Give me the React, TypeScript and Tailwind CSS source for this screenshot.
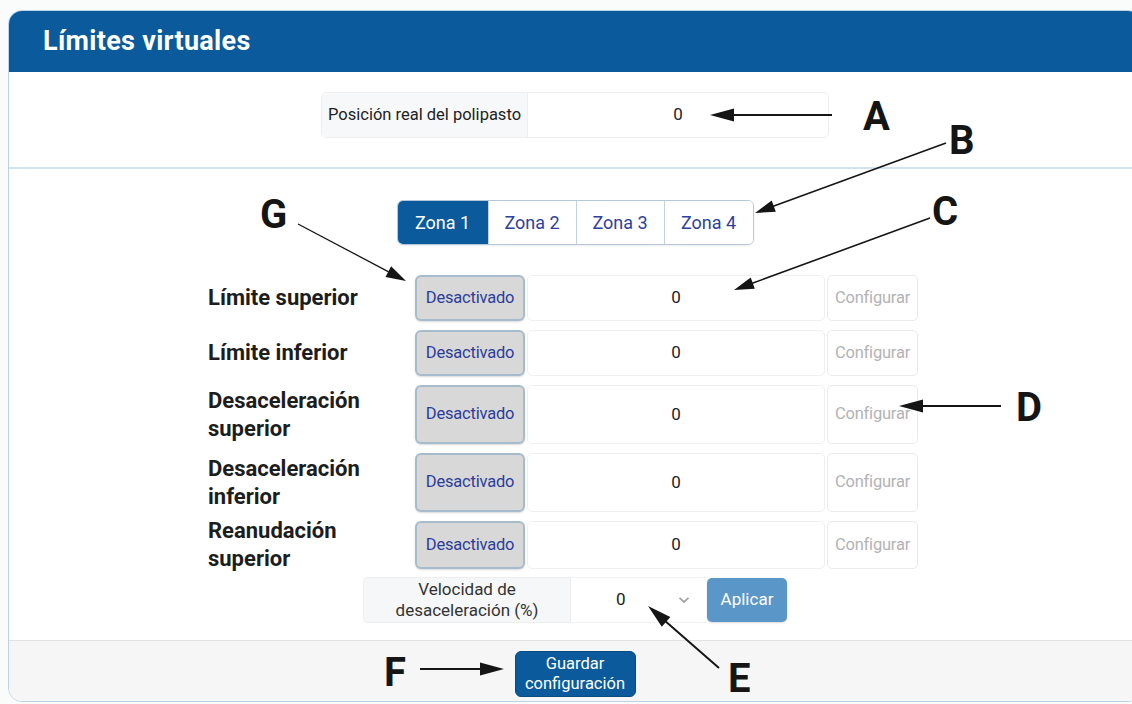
import React from 'react';

const rows = [
  { label: ['Límite superior'], h: 'h-[46px]' },
  { label: ['Límite inferior'], h: 'h-[46px]' },
  { label: ['Desaceleración', 'superior'], h: 'h-[59px]' },
  { label: ['Desaceleración', 'inferior'], h: 'h-[59px]' },
  { label: ['Reanudación', 'superior'], h: 'h-[48px]' },
];

const zones = [
  { name: 'Zona 1', w: 'w-[90px]' },
  { name: 'Zona 2', w: 'w-[88px]' },
  { name: 'Zona 3', w: 'w-[88px]' },
  { name: 'Zona 4', w: 'w-[89px]' },
];

function Arrow({
  x1,
  y1,
  x2,
  y2,
  w = 2,
  head = 24,
  half = 6.5,
}: {
  x1: number;
  y1: number;
  x2: number;
  y2: number;
  w?: number;
  head?: number;
  half?: number;
}) {
  const dx = x2 - x1;
  const dy = y2 - y1;
  const len = Math.hypot(dx, dy);
  const ux = dx / len;
  const uy = dy / len;
  const bx = x2 - ux * head;
  const by = y2 - uy * head;
  const px = -uy;
  const py = ux;
  return (
    <g>
      <line x1={x1} y1={y1} x2={bx + ux * 2} y2={by + uy * 2} stroke="#151515" strokeWidth={w} />
      <polygon
        points={`${x2},${y2} ${bx + px * half},${by + py * half} ${bx - px * half},${by - py * half}`}
        fill="#151515"
      />
    </g>
  );
}

// callout arrows and letters drawn over the form
function Callouts() {
  const letters = [
    { t: 'A', x: 863, y: 130 },
    { t: 'B', x: 949, y: 154 },
    { t: 'C', x: 932, y: 225 },
    { t: 'G', x: 260, y: 228 },
    { t: 'D', x: 1016, y: 421 },
    { t: 'E', x: 728, y: 692 },
    { t: 'F', x: 384, y: 686 },
  ];
  return (
    <svg className="absolute left-0 top-0 pointer-events-none" width={1132} height={704}>
      <Arrow x1={832} y1={115} x2={710} y2={115} />
      <Arrow x1={946} y1={143} x2={755} y2={213} w={1.6} head={20} half={6} />
      <Arrow x1={930} y1={218} x2={734} y2={290} w={1.6} head={20} half={6} />
      <Arrow x1={298} y1={224} x2={406} y2={281} w={1.3} head={20} half={6} />
      <Arrow x1={1001} y1={406} x2={899} y2={406} />
      <Arrow x1={719} y1={668} x2={648} y2={606} />
      <Arrow x1={420} y1={669} x2={504} y2={669} />
      {letters.map((l) => (
        <text
          key={l.t}
          x={l.x}
          y={l.y}
          fill="#151515"
          style={{ font: "700 40px Roboto, 'Liberation Sans', sans-serif" }}
        >
          {l.t}
        </text>
      ))}
    </svg>
  );
}

export default function App() {
  return (
    <div className="relative w-[1132px] h-[704px] overflow-hidden bg-[#fafbfb] pt-[10px] pl-[8px] font-['Roboto','Liberation_Sans',sans-serif]">
      <div className="w-[1134px] h-[692px] rounded-[14px] border border-[#bcd3e7] overflow-hidden flex flex-col bg-white">
        {/* Header */}
        <div className="h-[61px] shrink-0 bg-[#0a5a9c] flex items-center pl-[34px]">
          <h1 className="text-white text-[27px] font-bold tracking-[0.3px]">Límites virtuales</h1>
        </div>

        {/* Posición real */}
        <div className="h-[95px] shrink-0 flex justify-center pt-[20px]">
          <div className="flex h-[46px] w-[508px] rounded-[5px] border border-[#eeeeee] overflow-hidden">
            <div className="w-[206px] bg-[#f7f8f9] border-r border-[#eeeeee] flex items-center pl-[6px] text-[16.5px] text-[#222]">
              Posición real del polipasto
            </div>
            <div className="flex-1 flex items-center justify-center text-[17px] text-[#222]">0</div>
          </div>
        </div>

        <div className="h-[2px] shrink-0 bg-[#d3e2ef]" />

        {/* Zonas */}
        <div className="h-[471px] shrink-0 flex flex-col">
          <div className="mt-[31px] flex justify-center">
            <div className="flex h-[45px] rounded-[6px] border border-[#b5c8d9] overflow-hidden shadow-[0_1px_2px_rgba(0,0,0,0.08)]">
              {zones.map((z, i) => (
                <div
                  key={z.name}
                  className={
                    i === 0
                      ? `${z.w} bg-[#0a5a9c] text-white flex items-center justify-center text-[18px]`
                      : `${z.w} bg-white text-[#2e3f9c] border-l border-[#c2d2e0] flex items-center justify-center text-[18px]`
                  }
                >
                  {z.name}
                </div>
              ))}
            </div>
          </div>

          <div className="mt-[30px] pl-[199px] flex flex-col gap-[9px]">
            {rows.map((r) => (
              <div key={r.label.join(' ')} className={`${r.h} flex items-stretch`}>
                <div className="w-[207px] flex flex-col justify-center text-[22px] font-bold leading-[28px] text-[#1d1d1d]">
                  {r.label.map((l) => (
                    <span key={l}>{l}</span>
                  ))}
                </div>
                <div className="w-[110px] rounded-[6px] border-2 border-[#a6bccd] bg-[#d8d8d8] flex items-center justify-center text-[16.5px] tracking-[-0.2px] text-[#2c3d9a] shadow-[0_1px_2px_rgba(0,0,0,0.15)]">
                  Desactivado
                </div>
                <div className="ml-[2px] w-[298px] rounded-[5px] border border-[#efefef] bg-white flex items-center justify-center text-[17px] text-[#222]">
                  0
                </div>
                <div className="ml-[2px] w-[91px] rounded-[5px] border border-[#ebebeb] bg-white flex items-center justify-center text-[16.5px] tracking-[-0.2px] text-[#b3b3b3]">
                  Configurar
                </div>
              </div>
            ))}
          </div>

          {/* Velocidad */}
          <div className="mt-[8px] flex justify-center">
            <div className="flex h-[46px] w-[424px]">
              <div className="w-[208px] rounded-l-[5px] border border-[#eeeeee] bg-[#f6f7f8] flex flex-col items-center justify-center text-[17px] leading-[21px] text-[#333]">
                <span>Velocidad de</span>
                <span>desaceleración (%)</span>
              </div>
              <div className="w-[136px] bg-white border-y border-[#f1f1f1] flex items-center text-[17px] text-[#222]">
                <span className="ml-[45px]">0</span>
                <svg className="ml-[52px]" width="12" height="8" viewBox="0 0 12 8">
                  <path d="M1.5 1.8 L6 6 L10.5 1.8" fill="none" stroke="#a5a5a5" strokeWidth="1.8" />
                </svg>
              </div>
              <div className="w-[80px] my-[1px] rounded-[5px] bg-[#5a96c8] flex items-center justify-center text-[17px] text-white shadow-[0_1px_2px_rgba(0,0,0,0.15)]">
                Aplicar
              </div>
            </div>
          </div>
        </div>

        {/* Footer */}
        <div className="flex-1 border-t border-[#e3e3e3] bg-[#f6f6f6] flex justify-center pt-[10px]">
          <div className="w-[121px] h-[46px] rounded-[6px] border border-[#084a82] bg-[#0a5a9c] flex flex-col items-center justify-center text-[16.5px] leading-[20px] text-white">
            <span>Guardar</span>
            <span>configuración</span>
          </div>
        </div>
      </div>

      <Callouts />
    </div>
  );
}
